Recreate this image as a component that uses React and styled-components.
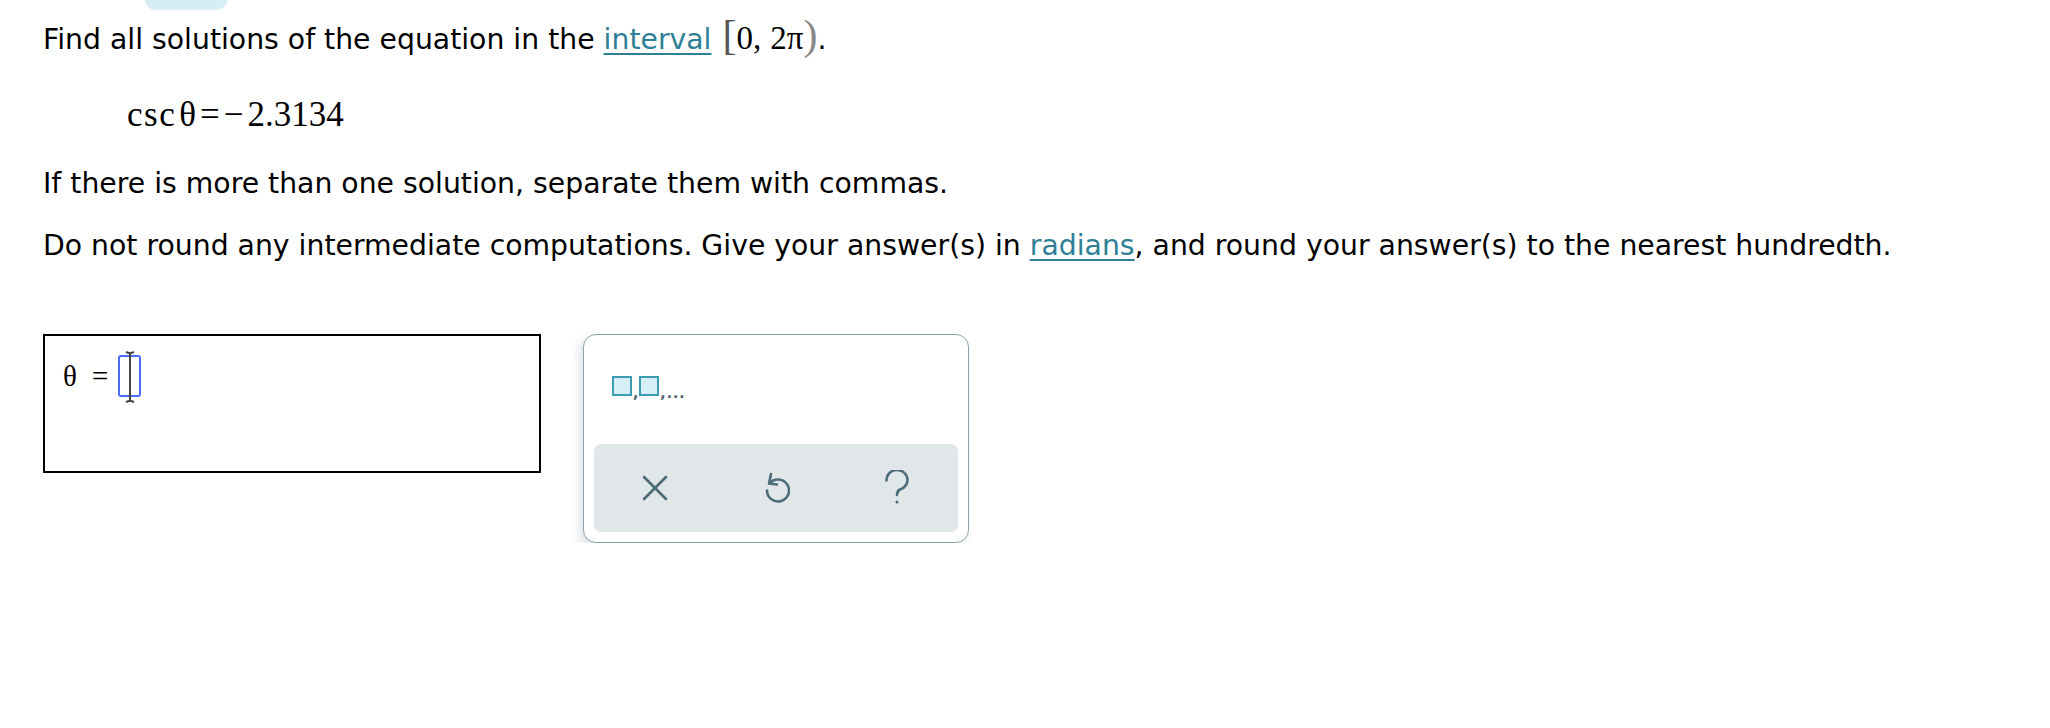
import React from "react";
import styled, { createGlobalStyle } from "styled-components";

const GlobalStyle = createGlobalStyle`
  html, body { margin: 0; padding: 0; background: #ffffff; }
  body { font-family: "DejaVu Sans", Verdana, sans-serif; color: #000; }
`;

const Page = styled.div`
  padding-left: 43px;
  width: 2007px;
`;

const TopTab = styled.div`
  margin-left: 102px;
  width: 82px;
  height: 10px;
  background: #d5edf3;
  border-radius: 0 0 12px 12px;
`;

const Para = styled.p`
  margin: ${(p) => p.$mt}px 0 0 0;
  font-size: 28.3px;
  line-height: 40px;
  height: 40px;
  white-space: nowrap;
`;

const Link = styled.span`
  color: #2f7f96;
  text-decoration: underline;
  text-decoration-thickness: 2px;
  text-underline-offset: 4px;
`;

const Math = styled.span`
  font-family: "Liberation Serif", "Times New Roman", serif;
  font-size: ${(p) => p.$size || 33}px;
  line-height: 0;
  color: ${(p) => p.$color || "#000"};
  margin: ${(p) => p.$m || "0"};
  letter-spacing: ${(p) => p.$ls || 0}px;
`;

const EqLine = styled.div`
  margin: 35px 0 0 84px;
  font-family: "Liberation Serif", "Times New Roman", serif;
  font-size: 35px;
  line-height: 40px;
  height: 40px;
  white-space: nowrap;
`;

const AnswerRow = styled.div`
  margin-top: 68px;
  display: flex;
  align-items: flex-start;
  gap: 42px;
`;

const AnswerBox = styled.div`
  box-sizing: border-box;
  width: 498px;
  height: 139px;
  border: 2px solid #000;
  padding: 19px 0 0 18px;
`;

const Expr = styled.div`
  display: flex;
  align-items: center;
  height: 42px;
  font-family: "Liberation Serif", "Times New Roman", serif;
  font-size: 29px;
`;

const Eq = styled.span`
  margin: 0 10px 0 15px;
`;

const Slot = styled.span`
  position: relative;
  box-sizing: border-box;
  width: 23px;
  height: 42px;
  border: 2px solid #4a6cf7;
  border-radius: 3px;
`;

const Cursor = styled.svg`
  position: absolute;
  left: 50%;
  top: -6px;
  transform: translateX(-50%);
`;

const Panel = styled.div`
  box-sizing: border-box;
  width: 386px;
  height: 209px;
  border: 1.5px solid #8da1ab;
  border-radius: 13px;
  background: #fff;
  box-shadow: -4px 4px 10px rgba(40, 60, 70, 0.14);
  padding: 0 10px 10px 10px;
  display: flex;
  flex-direction: column;
`;

const TemplateArea = styled.div`
  flex: 1;
  padding: 41px 0 0 18px;
  display: flex;
  align-items: flex-start;
`;

const TemplateBtn = styled.div`
  display: flex;
  align-items: flex-end;
  height: 20px;
  font-family: "DejaVu Sans", sans-serif;
  font-size: 14px;
  font-weight: bold;
  color: #4c5f68;
  line-height: 14px;
`;

const Box = styled.span`
  box-sizing: border-box;
  width: 20px;
  height: 20px;
  border: 2.5px solid #3d9bb4;
  background: #d6eff4;
`;

const Sep = styled.span`
  margin: 0 1px;
  transform: translateY(4px);
  letter-spacing: ${(p) => p.$ls || 0}px;
`;

const ButtonBar = styled.div`
  height: 88px;
  background: #e1e6e9;
  border-radius: 7px;
  display: grid;
  grid-template-columns: repeat(3, 1fr);
  align-items: center;
  justify-items: center;
`;

const IconBtn = styled.div`
  display: flex;
  align-items: center;
  justify-content: center;
  width: 40px;
  height: 40px;
  color: #4b6c79;
`;

export default function App() {
  return (
    <>
      <GlobalStyle />
      <Page>
        <TopTab />
        <Para $mt={10}>
          Find all solutions of the equation in the <Link>interval</Link>{" "}
          <Math $size={42} $color="#555" $m="0 0 0 2px">[</Math>
          <Math>0,</Math> <Math>2π</Math>
          <Math $size={42} $color="#888">)</Math>.
        </Para>
        <EqLine>
          <Math $size={35} $ls={1.5}>csc</Math>
          <Math $size={35} $m="0 0 0 3px">θ</Math>
          <Math $size={35} $m="0 4px">=</Math>
          <Math $size={35} $m="0 4px 0 0">−</Math>
          <Math $size={35}>2.3134</Math>
        </EqLine>
        <Para $mt={29}>If there is more than one solution, separate them with commas.</Para>
        <Para $mt={22}>
          Do not round any intermediate computations. Give your answer(s) in{" "}
          <Link>radians</Link>, and round your answer(s) to the nearest hundredth.
        </Para>
        <AnswerRow>
          <AnswerBox>
            <Expr>
              <span>θ</span>
              <Eq>=</Eq>
              <Slot>
                <Cursor width="12" height="52" viewBox="0 0 12 52">
                  <g stroke="#444" strokeWidth="2" fill="none">
                    <line x1="6" y1="2" x2="6" y2="50" />
                    <path d="M2 1 Q6 3 10 1" />
                    <path d="M2 51 Q6 49 10 51" />
                  </g>
                </Cursor>
              </Slot>
            </Expr>
          </AnswerBox>
          <Panel>
            <TemplateArea>
              <TemplateBtn>
                <Box />
                <Sep>,</Sep>
                <Box />
                <Sep $ls={1}>,...</Sep>
              </TemplateBtn>
            </TemplateArea>
            <ButtonBar>
              <IconBtn>
                <svg width="26" height="26" viewBox="0 0 26 26" fill="none" stroke="currentColor" strokeWidth="2.6" strokeLinecap="round">
                  <line x1="2" y1="2" x2="24" y2="24" />
                  <line x1="24" y1="2" x2="2" y2="24" />
                </svg>
              </IconBtn>
              <IconBtn>
                <svg width="28" height="34" viewBox="0 0 28 34" fill="none" stroke="currentColor" strokeWidth="2.6" strokeLinecap="round" strokeLinejoin="round">
                  <path d="M7.5 12.5 A11 11 0 1 1 5 19.5" />
                  <path d="M9 3 L7 12.5 L15 13.5" />
                </svg>
              </IconBtn>
              <IconBtn>
                <svg width="26" height="36" viewBox="0 0 26 36" fill="none" stroke="currentColor" strokeWidth="2.6" strokeLinecap="round" strokeLinejoin="round">
                  <path d="M2.5 10.5 A10.5 10 0 1 1 16 19.5 C14 20.5 13 22 13 25" />
                  <circle cx="13" cy="32" r="1.5" fill="currentColor" stroke="none" />
                </svg>
              </IconBtn>
            </ButtonBar>
          </Panel>
        </AnswerRow>
      </Page>
    </>
  );
}
